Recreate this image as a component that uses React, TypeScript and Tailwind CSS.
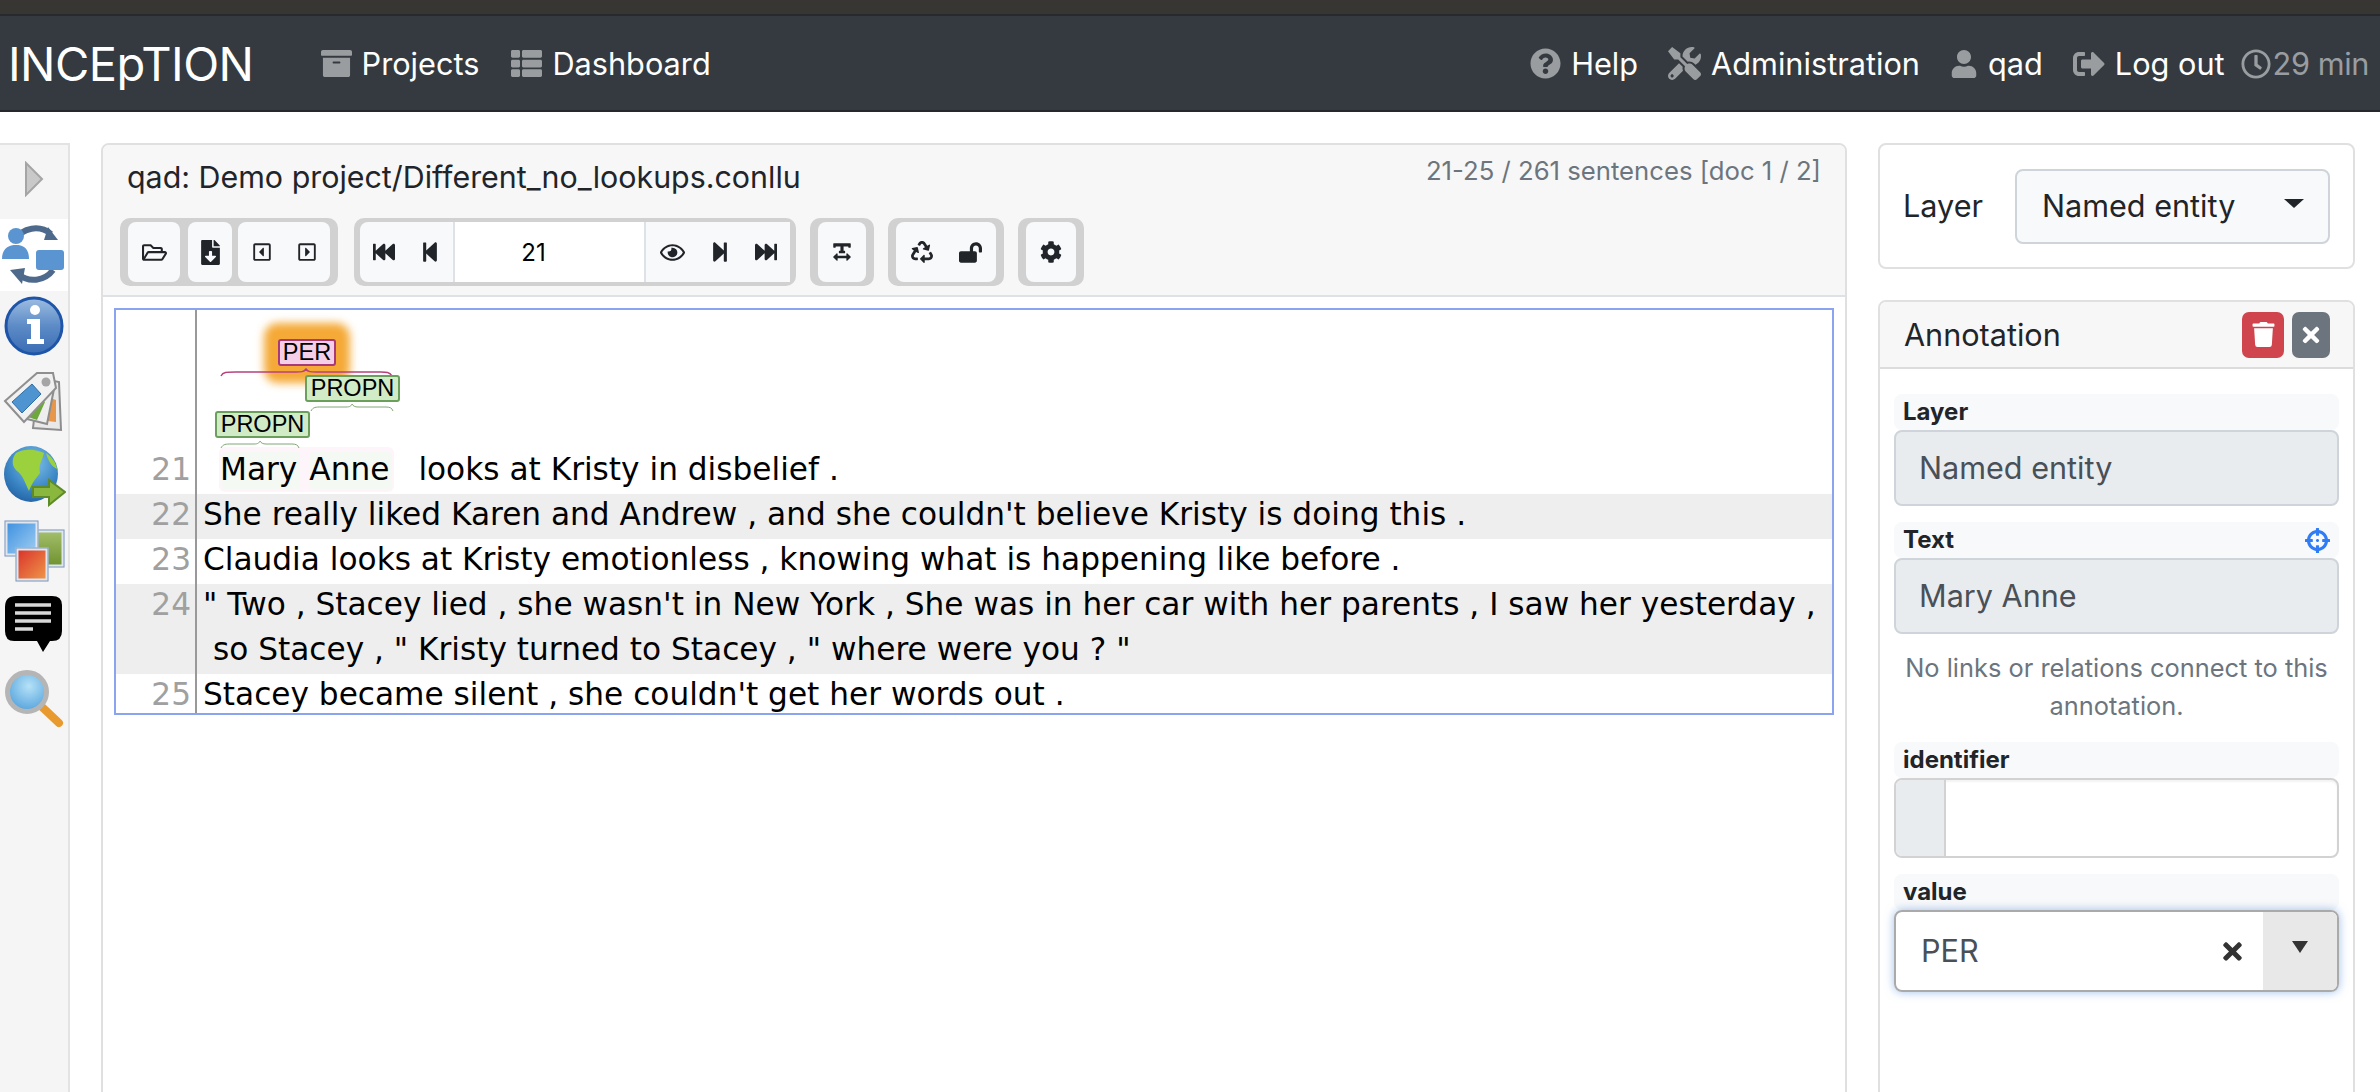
import {
  FaArchive,
  FaThList,
  FaQuestionCircle,
  FaTools,
  FaUser,
  FaSignOutAlt,
  FaRegClock,
  FaRegFolderOpen,
  FaFileDownload,
  FaRegCaretSquareLeft,
  FaRegCaretSquareRight,
  FaFastBackward,
  FaStepBackward,
  FaRegEye,
  FaStepForward,
  FaFastForward,
  FaTextWidth,
  FaRecycle,
  FaLockOpen,
  FaCog,
  FaTrash,
  FaTimes,
  FaCrosshairs,
} from "react-icons/fa";

const SyncIcon = () => (
  <svg width="66" height="62" viewBox="0 0 66 62">
    <path d="M14 16 A24 24 0 0 1 50 10" fill="none" stroke="#4d6a8c" strokeWidth="6" />
    <path d="M47 3 L57 16 L43 16 Z" fill="#4d6a8c" />
    <path d="M52 46 A24 24 0 0 1 17 50" fill="none" stroke="#4d6a8c" strokeWidth="6" />
    <path d="M21 60 L9 46 L24 44 Z" fill="#4d6a8c" />
    <circle cx="15" cy="12" r="8" fill="#5a95d2" />
    <path d="M1 35 C1 24 8 21 15 21 C22 21 28 24 28 35 Z" fill="#5a95d2" />
    <rect x="35" y="26" width="28" height="20" rx="3" fill="#5a95d2" />
  </svg>
);

const InfoIcon = () => (
  <svg width="62" height="62" viewBox="0 0 62 62">
    <defs>
      <linearGradient id="infoFill" x1="0" y1="0" x2="0" y2="1">
        <stop offset="0" stopColor="#9dbde2" />
        <stop offset="0.5" stopColor="#5c8bc6" />
        <stop offset="1" stopColor="#3a6cb4" />
      </linearGradient>
    </defs>
    <circle cx="31" cy="31" r="28" fill="url(#infoFill)" stroke="#1f55a8" strokeWidth="3" />
    <circle cx="32" cy="15" r="5" fill="#fff" />
    <path d="M24 24 H37 V44 H41 V49 H24 V44 H28 V29 H24 Z" fill="#fff" />
  </svg>
);

const TagIcon = () => (
  <svg width="62" height="62" viewBox="0 0 62 62">
    <path d="M36 8 L56 12 L58 60 L30 58 Z" fill="#e9e9e9" stroke="#8d8d8d" strokeWidth="2" />
    <path d="M42 26 L53 30 L53 52 L36 50 Z" fill="#e8964a" />
    <path d="M32 6 L52 14 L44 54 L20 48 Z" fill="#eeeeee" stroke="#8d8d8d" strokeWidth="2" />
    <path d="M34 28 L42 32 L34 50 L22 46 Z" fill="#6ea83c" />
    <path d="M2 31 L34 3 L50 3 L53 18 L21 52 Z" fill="#f1f1f1" stroke="#8f8f8f" strokeWidth="2" />
    <path d="M9 32 L29 14 L38 24 L19 43 Z" fill="#4e94d0" stroke="#2f6ea8" strokeWidth="1" />
    <circle cx="43" cy="12" r="4.5" fill="#a5a5a5" />
  </svg>
);

const GlobeIcon = () => (
  <svg width="64" height="62" viewBox="0 0 64 62">
    <defs>
      <radialGradient id="globeFill" cx="0.55" cy="0.3" r="0.8">
        <stop offset="0" stopColor="#7fc0e8" />
        <stop offset="0.6" stopColor="#3a85c4" />
        <stop offset="1" stopColor="#1d5a9c" />
      </radialGradient>
    </defs>
    <ellipse cx="29" cy="29" rx="27" ry="28" fill="url(#globeFill)" />
    <path d="M14 8 C24 2 38 6 42 8 C40 16 36 20 38 28 C32 36 30 38 27 46 C23 38 21 30 15 26 C10 22 9 14 14 8 Z" fill="#9bd13c" />
    <path d="M44 8 C50 12 54 18 55 24 C50 22 46 16 44 8 Z" fill="#9bd13c" />
    <path d="M31 42 H47 V35 L63 47 L47 60 V52 H31 Z" fill="#8ab83e" stroke="#5f8a2a" strokeWidth="2" />
  </svg>
);

const WindowsIcon = () => (
  <svg width="62" height="62" viewBox="0 0 62 62">
    <defs>
      <linearGradient id="winBlue" x1="0" y1="0" x2="1" y2="1">
        <stop offset="0" stopColor="#3b8fe0" />
        <stop offset="1" stopColor="#a4d0f2" />
      </linearGradient>
      <linearGradient id="winRed" x1="0" y1="0" x2="1" y2="1">
        <stop offset="0" stopColor="#d9302a" />
        <stop offset="1" stopColor="#ef9a4a" />
      </linearGradient>
      <linearGradient id="winGreen" x1="0" y1="0" x2="0" y2="1">
        <stop offset="0" stopColor="#a3bf6a" />
        <stop offset="1" stopColor="#6f9230" />
      </linearGradient>
    </defs>
    <rect x="30" y="11" width="30" height="35" fill="url(#winGreen)" stroke="#dfe6ee" strokeWidth="3" />
    <rect x="29" y="10" width="32" height="37" fill="none" stroke="#7f99bd" strokeWidth="1" />
    <rect x="3" y="2" width="31" height="33" fill="url(#winBlue)" stroke="#dfe6ee" strokeWidth="3" />
    <rect x="2" y="1" width="33" height="35" fill="none" stroke="#7f99bd" strokeWidth="1" />
    <rect x="14" y="29" width="30" height="31" fill="url(#winRed)" stroke="#dfe6ee" strokeWidth="3" />
    <rect x="13" y="28" width="32" height="33" fill="none" stroke="#7f99bd" strokeWidth="1" />
  </svg>
);

const ChatIcon = () => (
  <svg width="60" height="62" viewBox="0 0 60 62">
    <path d="M12 1 H48 Q58 1 58 10 V36 Q58 46 48 46 H46 L39 57 L33 46 H10 Q1 46 1 36 V12 Q1 1 12 1 Z" fill="#000" />
    <path d="M11 10 H47 M11 18 H47 M11 26 H47 M11 34 H29" stroke="#d8d8d8" strokeWidth="3.5" fill="none" />
  </svg>
);

const SearchIcon = () => (
  <svg width="62" height="60" viewBox="0 0 62 60">
    <defs>
      <radialGradient id="lens" cx="0.55" cy="0.35" r="0.7">
        <stop offset="0" stopColor="#b6e2f7" />
        <stop offset="1" stopColor="#4f9fdb" />
      </radialGradient>
    </defs>
    <path d="M38 36 L56 53" stroke="#e89a2e" strokeWidth="8" strokeLinecap="round" />
    <circle cx="24" cy="22" r="19.5" fill="url(#lens)" stroke="#b5b5b5" strokeWidth="5" />
  </svg>
);

const toolBtn = "flex items-center justify-center h-full bg-[#f8f9fa] rounded-[8px] text-[#212529]";

const NavItem = ({ icon, label, dim }: { icon: React.ReactNode; label: string; dim?: boolean }) => (
  <div className={`flex items-center gap-[10px] ${dim ? "text-[#9a9da0]" : "text-white"}`}>
    <span className="text-[#9a9da0]">{icon}</span>
    <span>{label}</span>
  </div>
);

const Field = ({ label, extra, children }: { label: string; extra?: React.ReactNode; children: React.ReactNode }) => (
  <div className="mb-[16px]">
    <div className="h-[36px] bg-[#f8f9fa] rounded-[8px] px-[9px] flex items-center justify-between text-[24px] font-bold text-[#212529]">
      {label}
      {extra}
    </div>
    {children}
  </div>
);

const sentenceRows = [
  { n: "22", shade: true, lines: ["She really liked Karen and Andrew , and she couldn't believe Kristy is doing this ."] },
  { n: "23", shade: false, lines: ["Claudia looks at Kristy emotionless , knowing what is happening like before ."] },
  {
    n: "24",
    shade: true,
    lines: [
      "\" Two , Stacey lied , she wasn't in New York , She was in her car with her parents , I saw her yesterday ,",
      " so Stacey , \" Kristy turned to Stacey , \" where were you ? \"",
    ],
  },
];

const AnnotationLabel = ({ text, className }: { text: string; className: string }) => (
  <div
    className={`absolute flex items-center justify-center rounded-[3px] border-2 font-['Liberation_Sans',sans-serif] text-[23.5px] leading-none text-black ${className}`}
  >
    {text}
  </div>
);

export default function App() {
  return (
    <div className="h-[1092px] w-[2380px] overflow-hidden bg-white font-['Inter',sans-serif] text-[30.6px] text-[#212529]">
      <div className="h-[16px] bg-[#383633] border-b-2 border-[#27292c]" />
      <nav className="h-[96px] bg-[#343a40] border-b-2 border-[#25292d] flex items-center pl-[8px] pr-[11px] pt-[2px] text-[30.7px]">
        <span className="text-white text-[47px] tracking-[-0.5px] mr-[67px]">INCEpTION</span>
        <div className="flex gap-[32px]">
          <NavItem icon={<FaArchive size={31} />} label="Projects" />
          <NavItem icon={<FaThList size={31} />} label="Dashboard" />
        </div>
        <div className="ml-auto flex items-center gap-[30px]">
          <NavItem icon={<FaQuestionCircle size={31} />} label="Help" />
          <NavItem icon={<FaTools size={33} />} label="Administration" />
          <NavItem icon={<FaUser size={28} />} label="qad" />
          <NavItem icon={<FaSignOutAlt size={32} />} label="Log out" />
          <div className="flex items-center gap-[2px] text-[#9a9da0] -ml-[14px]">
            <FaRegClock size={30} />
            <span className="tracking-[-0.4px]">29 min</span>
          </div>
        </div>
      </nav>

      <div className="flex pt-[31px] h-[980px]">
        {/* left icon rail */}
        <aside className="w-[70px] h-[1000px] bg-[#f5f5f5] border-t-2 border-r-2 border-[#e3e3e3] flex flex-col items-center">
          <svg width="20" height="36" viewBox="0 0 20 36" className="mt-[16px] mb-[22px]">
            <path d="M2 2 L18 18 L2 34 Z" fill="#c9c9c9" stroke="#a5a5a5" strokeWidth="2" />
          </svg>
          <div className="w-full h-[72px] bg-white flex items-center justify-center mb-[4px]">
            <SyncIcon />
          </div>
          <div className="flex flex-col gap-[13px] items-center">
            <InfoIcon />
            <TagIcon />
            <GlobeIcon />
            <WindowsIcon />
            <ChatIcon />
            <SearchIcon />
          </div>
        </aside>

        {/* editor card */}
        <main className="ml-[31px] w-[1746px] h-[1000px] border-2 border-[#e0e0e0] rounded-t-[8px] bg-white">
          <div className="h-[152px] bg-[#f7f7f7] border-b-2 border-[#dee2e6] rounded-t-[6px] relative">
            <div className="absolute left-[24px] top-[10px] text-[30.4px]">qad: Demo project/Different_no_lookups.conllu</div>
            <div className="absolute right-[24px] top-[7px] text-[25.7px] text-[#6c757d]">21-25 / 261 sentences [doc 1 / 2]</div>
            <div className="flex gap-[14px] pl-[17px] pt-[73px] h-full">
              <div className="flex h-[68px] bg-[#d1d1d1] rounded-[10px] px-[8px] py-[4px] gap-[8px] mr-[2px]">
                <div className={`${toolBtn} w-[52px]`}><FaRegFolderOpen size={25} /></div>
                <div className="flex gap-[6px]">
                  <div className={`${toolBtn} w-[44px]`}><FaFileDownload size={25} /></div>
                  <div className={`${toolBtn} w-[92px] gap-[25px]`}>
                    <FaRegCaretSquareLeft size={20} />
                    <FaRegCaretSquareRight size={20} />
                  </div>
                </div>
              </div>
              <div className="flex h-[68px] bg-[#d1d1d1] rounded-[10px] px-[6px] py-[4px]">
                <div className={`${toolBtn} w-[95px] gap-[24px] rounded-r-none border-r-2 border-[#dee2e6]`}>
                  <FaFastBackward size={22} />
                  <FaStepBackward size={22} />
                </div>
                <div className="w-[189px] bg-white flex items-center justify-center pr-[32px] pt-[2px] text-[24px] text-black">21</div>
                <div className={`${toolBtn} w-[146px] gap-[24px] rounded-l-none rounded-r-none border-l-2 border-[#dee2e6]`}>
                  <FaRegEye size={25} />
                  <FaStepForward size={22} />
                  <FaFastForward size={22} />
                </div>
              </div>
              <div className="flex h-[68px] bg-[#d1d1d1] rounded-[10px] px-[8px] py-[4px]">
                <div className={`${toolBtn} w-[48px]`}><FaTextWidth size={20} /></div>
              </div>
              <div className="flex h-[68px] bg-[#d1d1d1] rounded-[10px] px-[8px] py-[4px]">
                <div className={`${toolBtn} w-[100px] gap-[26px]`}>
                  <FaRecycle size={22} />
                  <FaLockOpen size={23} />
                </div>
              </div>
              <div className="flex h-[68px] bg-[#d1d1d1] rounded-[10px] px-[8px] py-[4px]">
                <div className={`${toolBtn} w-[50px]`}><FaCog size={22} /></div>
              </div>
            </div>
          </div>

          {/* annotation editor */}
          <div className="ml-[11px] mt-[11px] w-[1720px] border-2 border-[#8aa4f0] font-['DejaVu_Sans',sans-serif] text-[31.2px] text-black">
            <div className="flex h-[184px] relative">
              {/* span highlights */}
              <div className="absolute left-[103px] top-[137px] w-[175px] h-[45px] bg-[#fdf5fa] rounded-[6px]" />
              <div className="absolute left-[106px] top-[142px] w-[78px] h-[38px] bg-[#f5f9f3] rounded-[4px]" />
              <div className="absolute left-[194px] top-[142px] w-[82px] h-[38px] bg-[#f5f9f3] rounded-[4px]" />
              <div className="w-[81px] border-r-2 border-[#999] flex items-end justify-end pr-[4px] pb-[3px] text-[#a0a0a0] leading-[44px]">21</div>
              <div className="relative flex-1 flex items-end leading-[44px] pl-[23px] pb-[3px] whitespace-pre">
                <span>Mary</span>
                <span className="ml-[12px]">Anne</span>
                <span className="ml-[29px]">looks at Kristy in disbelief .</span>
              </div>
              <div className="absolute left-[148px] top-[13px] w-[86px] h-[60px] bg-[#f5a936] rounded-[14px] blur-[4px]" />
              <svg className="absolute left-[100px] top-[55px]" width="200" height="90" viewBox="0 0 200 90" fill="none">
                <path d="M5 11 C7 7 10 7 20 7 H80 C85 7 88 7 90 4 C92 7 95 7 100 7 H165 C170 7 174 7 176 11" stroke="#b8407f" strokeWidth="1.5" />
                <path d="M95 46 C97 42 100 42 105 42 H130 C134 42 135 41 136 39 C137 41 139 42 142 42 H170 C174 42 176 43 177 46" stroke="#7fa874" strokeWidth="1" />
                <path d="M5 83 C7 79 10 79 15 79 H38 C42 79 43 78 44 76 C45 78 47 79 50 79 H76 C80 79 82 80 83 83" stroke="#7fa874" strokeWidth="1" />
              </svg>
              <AnnotationLabel text="PER" className="left-[162px] top-[29px] w-[58px] h-[27px] bg-[#f5cfe8] border-[#a83a78]" />
              <AnnotationLabel text="PROPN" className="left-[189px] top-[65px] w-[95px] h-[27px] bg-[#d2ebc7] border-[#6aa05c]" />
              <AnnotationLabel text="PROPN" className="left-[99px] top-[101px] w-[95px] h-[27px] bg-[#d2ebc7] border-[#6aa05c]" />
            </div>
            {sentenceRows.map((row) => (
              <div key={row.n} className={`flex ${row.shade ? "bg-[#eeeeee]" : "bg-white"}`}>
                <div className="w-[81px] border-r-2 border-[#999] text-right pr-[4px] text-[#a0a0a0] leading-[45px]">
                  <span className="block -mt-[2px]">{row.n}</span>
                </div>
                <div className="flex-1 pl-[6px] -mt-[2px] pb-[2px] leading-[45px] whitespace-pre">
                  {row.lines.map((line) => (
                    <div key={line}>{line}</div>
                  ))}
                </div>
              </div>
            ))}
            <div className="flex h-[39px] leading-[40px]">
              <div className="w-[81px] border-r-2 border-[#999] text-right pr-[4px] text-[#a0a0a0]">25</div>
              <div className="flex-1 pl-[6px] whitespace-pre">Stacey became silent , she couldn't get her words out .</div>
            </div>
          </div>
        </main>

        {/* right column */}
        <div className="ml-[31px] w-[477px] flex flex-col gap-[31px]">
          <div className="h-[126px] border-2 border-[#e0e0e0] rounded-[8px] flex items-center pl-[23px] shrink-0">
            <span className="w-[112px]">Layer</span>
            <div className="w-[315px] h-[75px] bg-[#f8f9fa] border-2 border-[#ced4da] rounded-[8px] flex items-center pl-[25px] pr-[24px] justify-between">
              <span>Named entity</span>
              <span className="w-0 h-0 border-x-[10px] border-x-transparent border-t-[9px] border-t-[#212529] -mt-[6px]" />
            </div>
          </div>

          <div className="h-[900px] border-2 border-[#e0e0e0] rounded-t-[8px] shrink-0">
            <div className="h-[67px] bg-[#f7f7f7] border-b-2 border-[#dcdcdc] rounded-t-[6px] flex items-center pl-[24px] pr-[23px] justify-between">
              <span>Annotation</span>
              <div className="flex gap-[8px]">
                <div className="w-[42px] h-[46px] bg-[#cf444d] rounded-[7px] flex items-center justify-center text-white"><FaTrash size={25} /></div>
                <div className="w-[38px] h-[46px] bg-[#6c757d] rounded-[7px] flex items-center justify-center text-white"><FaTimes size={24} /></div>
              </div>
            </div>
            <div className="px-[14px] pt-[25px]">
              <Field label="Layer">
                <div className="h-[76px] bg-[#e9ecef] border-2 border-[#ced4da] rounded-[8px] flex items-center pl-[23px] text-[#495057]">Named entity</div>
              </Field>
              <Field label="Text" extra={<FaCrosshairs size={25} className="text-[#2f7cf6]" />}>
                <div className="h-[76px] bg-[#e9ecef] border-2 border-[#ced4da] rounded-[8px] flex items-center pl-[23px] text-[#495057]">Mary Anne</div>
              </Field>
              <p className="text-center text-[25.4px] leading-[38px] text-[#6c757d] mb-[16px] -mt-[1px] px-[4px] h-[77px]">
                No links or relations connect to this annotation.
              </p>
              <Field label="identifier">
                <div className="h-[80px] border-2 border-[#d2d2d2] rounded-[8px] flex overflow-hidden shadow-[inset_0_2px_2px_rgba(0,0,0,0.05)]">
                  <div className="w-[50px] bg-[#e9ecef] border-r-2 border-[#d2d2d2]" />
                </div>
              </Field>
              <Field label="value">
                <div className="h-[82px] border-2 border-[#aaaaaa] rounded-[8px] flex items-center overflow-hidden shadow-[0_0_10px_rgba(80,140,220,0.55)]">
                  <span className="pl-[25px] flex-1 text-[#495057]">PER</span>
                  <FaTimes size={27} className="text-[#333] mr-[17px]" />
                  <div className="w-[74px] h-full bg-[#e8e8e8] flex items-center justify-center">
                    <span className="w-0 h-0 border-x-[8px] border-x-transparent border-t-[12px] border-t-[#333] -mt-[8px]" />
                  </div>
                </div>
              </Field>
            </div>
          </div>
        </div>
      </div>
    </div>
  );
}
